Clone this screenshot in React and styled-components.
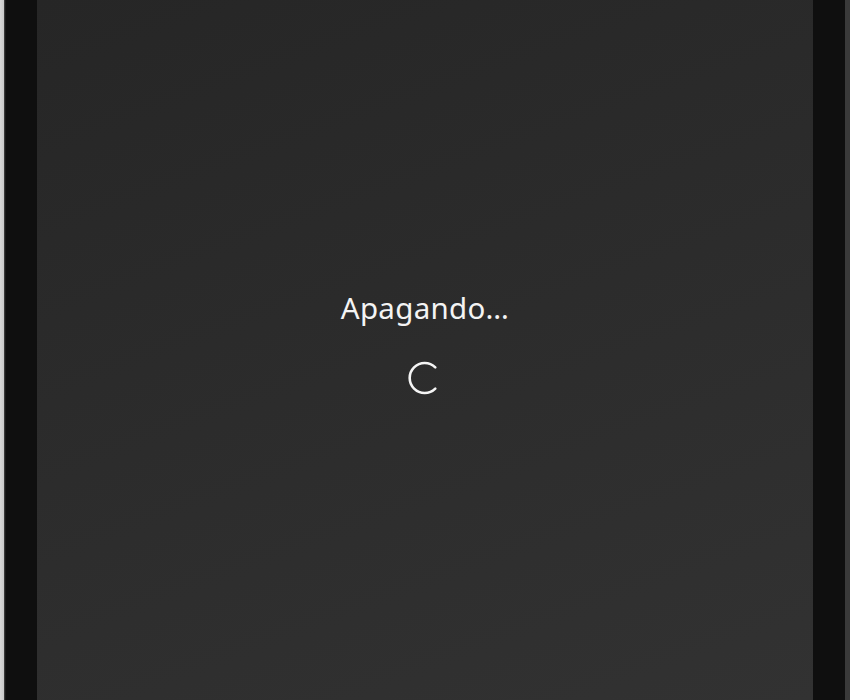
import React from 'react'
import styled, { createGlobalStyle } from 'styled-components'

const GlobalStyle = createGlobalStyle`
  html, body {
    margin: 0;
    padding: 0;
    background: #e4e4e4;
  }
`

const Frame = styled.div`
  display: flex;
  width: 850px;
  height: 700px;
  padding: 0 5px 0 5px;
  box-sizing: border-box;
  background: linear-gradient(90deg, #d8d8d8 0, #c9c9c9 4px, #3a3a3a 4px, #3a3a3a 5px);
`

const Bezel = styled.div`
  flex: 1;
  display: flex;
  padding: 0 32px 0 32px;
  background: #0f0f0f;
  box-shadow: inset 1px 0 0 #1a1a1a;
`

const Screen = styled.main`
  flex: 1;
  display: flex;
  flex-direction: column;
  align-items: center;
  padding-top: 288px;
  background: linear-gradient(160deg, #262626 0%, #2c2c2c 50%, #323232 100%);
`

const Title = styled.div`
  font-family: 'Noto Sans', 'Open Sans', sans-serif;
  font-size: 29.5px;
  color: #f4f4f4;
  letter-spacing: 0.3px;
  line-height: 40px;
`

const Spinner = styled.svg`
  margin-top: 32px;
  margin-left: -3px;
`

export default function App() {
  return (
    <>
      <GlobalStyle />
      <Frame>
        <Bezel>
          <Screen>
            <Title>Apagando…</Title>
            <Spinner width="36" height="36" viewBox="0 0 36 36">
              <path
                d="M29.3 7.4 A15 15 0 1 0 29.3 28.6"
                fill="none"
                stroke="#f4f4f4"
                strokeWidth="2.6"
                strokeLinecap="round"
              />
            </Spinner>
          </Screen>
        </Bezel>
      </Frame>
    </>
  )
}
